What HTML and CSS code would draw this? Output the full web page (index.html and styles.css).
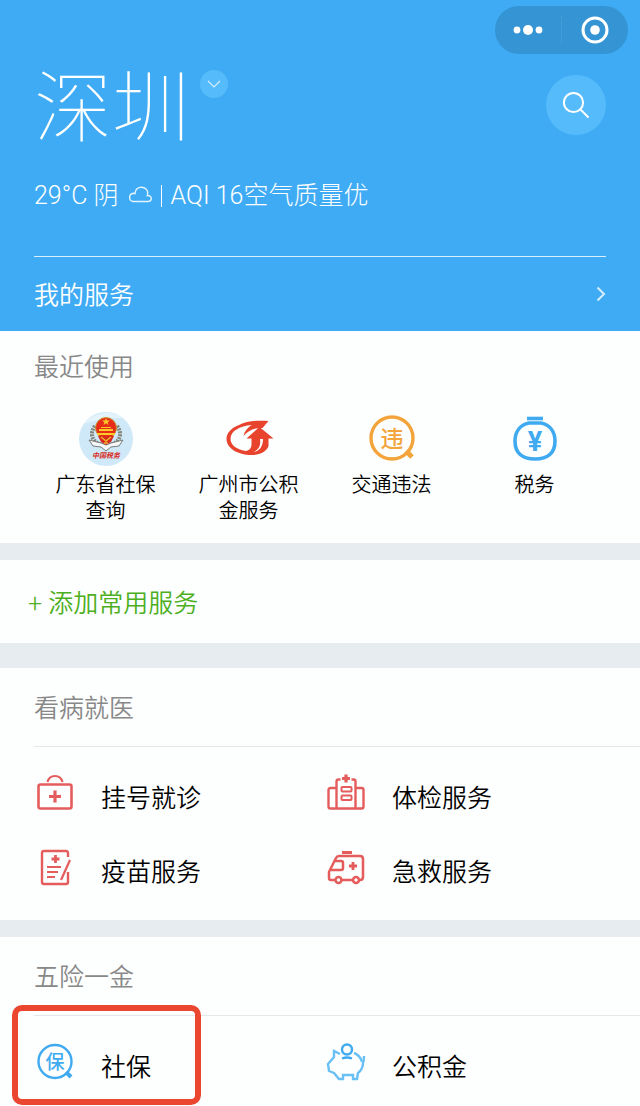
FILE: index.html
```html
<!DOCTYPE html>
<html lang="zh-CN">
<head>
    <meta charset="UTF-8">
    <meta name="viewport" content="width=device-width, initial-scale=1.0">
    <title>城市服务</title>
    <link rel="stylesheet" href="styles.css">
</head>
<body>
    <header class="hero">
        <div class="capsule-bar">
            <div class="capsule">
                <button type="button" aria-label="更多">
                    <svg width="32" height="12" viewBox="0 0 32 12" fill="#fff">
                        <circle cx="5" cy="6" r="3.4"/>
                        <circle cx="16" cy="6" r="5"/>
                        <circle cx="27" cy="6" r="3.4"/>
                    </svg>
                </button>
                <button type="button" aria-label="关闭">
                    <svg width="28" height="28" viewBox="0 0 28 28">
                        <circle cx="14" cy="14" r="12" fill="none" stroke="#fff" stroke-width="3"/>
                        <circle cx="14" cy="14" r="4.8" fill="#fff"/>
                    </svg>
                </button>
            </div>
        </div>

        <div class="city-row">
            <h1 class="city">深圳</h1>
            <button type="button" class="city-switch" aria-label="切换城市">
                <svg width="14" height="8" viewBox="0 0 14 8" fill="none" stroke="#d6eefc" stroke-width="1.2">
                    <path d="M1 1l6 6 6-6"/>
                </svg>
            </button>
            <button type="button" class="search-btn" aria-label="搜索">
                <svg width="28" height="28" viewBox="0 0 28 28" fill="none" stroke="#fff" stroke-width="2" stroke-linecap="round">
                    <circle cx="11.5" cy="11.5" r="9.6"/>
                    <path d="M18.5 18.5l7.500 7.500"/>
                </svg>
            </button>
        </div>

        <p class="weather">
            <span>29°C 阴</span>
            <svg width="24" height="20" viewBox="0 0 24 20" fill="none" stroke="#e4f4fe" stroke-width="1.400">
                <path d="M5 15.500a4.200 4.200 0 0 1 .5-8.300c.7 0 1 .1 1.500.300C7.200 3.500 10 1.200 13.400 1.200c3.800 0 6.500 2.900 6.300 6.300-.1 1-.2 1.600-.4 2.100 2.400-.3 4 1 4 2.900s-1.400 3-3.300 3z"/>
            </svg>
            <span class="weather-line"></span>
            <span>AQI 16空气质量优</span>
        </p>

        <a href="#" class="my-services">
            <span>我的服务</span>
            <svg width="10" height="16" viewBox="0 0 10 16" fill="none" stroke="#d6eefc" stroke-width="2">
                <path d="M1.500 1.500L8 8l-6.500 6.500"/>
            </svg>
        </a>
    </header>

    <main>
        <section class="card recent">
            <h2 class="recent-title">最近使用</h2>
            <div class="recent-grid">
                <a href="#" class="recent-item">
                    <svg class="recent-icon" viewBox="0 0 54 54">
                        <circle cx="27" cy="27" r="27" fill="#cfe9f8"/>
                        <path d="M5 12C14-1 34-2 44 6c-9 0-22 0-39 6z" fill="#e3f3fb"/>
                        <path d="M16 14c-6 8-3 16 7 19M38 14c6 8 3 16-7 19" fill="none" stroke="#85847a" stroke-width="4" stroke-dasharray="2 1"/>
                        <path d="M10 28l12 3 5 2 5-2 12-3-4 6-8 1-5 4-5-4-8-1z" fill="#f5f8f7" stroke="#777c7b" stroke-width="1"/>
                        <circle cx="27" cy="16" r="10.500" fill="#e72d18" stroke="#c99331" stroke-width="1"/>
                        <path d="M27 6l1 2.500h3l-2.300 1.700.8 2.800-2.500-1.700-2.500 1.700.8-2.800L23 8.500h3zM20 17h14v2H20zM22 15h10v1H22zM18 21h18v2H18z" fill="#ffc928"/>
                        <path d="M19 24h16l-3 6-5 3-5-3z" fill="#d8291b"/>
                        <path d="M22 25l5 4 5-4M25 31h4" fill="none" stroke="#efb52d" stroke-width="1.500"/>
                        <text x="27" y="46" class="emblem-text">中国税务</text>
                    </svg>
                    <span>广东省社保查询</span>
                </a>
                <a href="#" class="recent-item">
                    <svg class="recent-icon" viewBox="0 0 54 54" fill="#e8432d">
                        <path d="M46.500 9C36 8 25 9 17 13 9 16 4.500 21 4.500 27c0 9 11 16 25 16 8 0 15-3 17-9V26.500h5L37.500 15 24.500 26.500h5V32c0 4-2 6-5 7C15 38 8.500 33 8.500 27c0-8 9-13 21-14-4 3-7 6-8 11 5-5 9-8 19-8z"/>
                        <path d="M38 27c1 6-1 10-6 13 5-1 9-5 9-13z" fill="#fdfefe"/>
                    </svg>
                    <span>广州市公积金服务</span>
                </a>
                <a href="#" class="recent-item">
                    <svg class="recent-icon" viewBox="0 0 54 54">
                        <circle cx="27" cy="26" r="21" fill="none" stroke="#f3a43b" stroke-width="3.400"/>
                        <path d="M41 39l6 6" stroke="#f3a43b" stroke-width="5"/>
                        <text x="27" y="35" class="glyph glyph-orange">违</text>
                    </svg>
                    <span>交通违法</span>
                </a>
                <a href="#" class="recent-item">
                    <svg class="recent-icon" viewBox="0 0 54 54" fill="none" stroke="#40aaf0" stroke-width="3.600">
                        <path d="M19 6.500h16"/>
                        <path d="M21 11h12C42 13 47 20 47 29c0 12-7 18-20 18S7 41 7 29C7 20 12 13 21 11z"/>
                        <text x="27" y="39" class="glyph glyph-yen">¥</text>
                    </svg>
                    <span>税务</span>
                </a>
            </div>
        </section>

        <section class="card add-card">
            <a href="#" class="add-link">+ 添加常用服务</a>
        </section>

        <section class="card">
            <h2 class="card-title">看病就医</h2>
            <div class="service-grid">
                <a href="#" class="service">
                    <svg class="service-icon" viewBox="0 0 42 42" fill="none" stroke="#e55c5c" stroke-width="2.600">
                        <rect x="4.500" y="11.500" width="33" height="24" rx="2"/>
                        <path d="M13.500 9c2-8 13-8 15 0" stroke-width="2.200"/>
                        <path d="M21 17.500v12M15 23.500h12" stroke-width="3.200"/>
                    </svg>
                    <span>挂号就诊</span>
                </a>
                <a href="#" class="service">
                    <svg class="service-icon" viewBox="0 0 42 42" fill="none" stroke="#e55c5c" stroke-width="2.400">
                        <path d="M11.500 36V8.500q0-2 2-2H15.500M26.500 6.500h2q2 0 2 2V36"/>
                        <path d="M11.500 15H5.500q-2 0-2 2v16.500q0 2 2 2h31q2 0 2-2V17q0-2-2-2h-6"/>
                        <path d="M21 1.500v8M17 5.500h8" stroke-width="3.200"/>
                        <rect x="16.500" y="14" width="10" height="4.500" rx="1" stroke-width="2"/>
                        <rect x="16.500" y="22.500" width="10" height="4.500" rx="1" stroke-width="2"/>
                    </svg>
                    <span>体检服务</span>
                </a>
                <a href="#" class="service">
                    <svg class="service-icon" viewBox="0 0 42 42" fill="none" stroke="#e55c5c" stroke-width="2.400">
                        <path d="M34 10V6q0-2-2-2H10Q8 4 8 6v29q0 2 2 2h22q2 0 2-2V25"/>
                        <path d="M36 13L27 33" stroke-width="2.200"/>
                        <path d="M21.500 8v8M17.500 12h8" stroke-width="2.800"/>
                        <path d="M13 20h14M13 25h11M13 30h8" stroke-width="2"/>
                    </svg>
                    <span>疫苗服务</span>
                </a>
                <a href="#" class="service">
                    <svg class="service-icon" viewBox="0 0 42 42" fill="none" stroke="#e55c5c" stroke-width="2.500">
                        <path d="M10 33H6q-2 0-2-2v-6l7-14q1-2 3-2h21q3 0 3 3v18q0 3-3 3h-2M17 33h10"/>
                        <path d="M9 14h7q2 0 2 2v5q0 2-2 2H6"/>
                        <path d="M17 5.500h10M28 15v8M24 19h8" stroke-width="2.800"/>
                        <circle cx="13.500" cy="33" r="3"/>
                        <circle cx="31" cy="33" r="3"/>
                    </svg>
                    <span>急救服务</span>
                </a>
            </div>
        </section>

        <section class="card">
            <h2 class="card-title">五险一金</h2>
            <div class="service-grid">
                <a href="#" class="service marked">
                    <svg class="service-icon" viewBox="0 0 42 42">
                        <circle cx="21" cy="19.500" r="16.500" fill="none" stroke="#40aaf0" stroke-width="2.400"/>
                        <path d="M32 30l5 5" stroke="#40aaf0" stroke-width="4"/>
                        <text x="21" y="26.500" class="glyph glyph-blue">保</text>
                    </svg>
                    <span>社保</span>
                </a>
                <a href="#" class="service">
                    <svg class="service-icon" viewBox="0 0 42 42" fill="none" stroke="#69c0f4" stroke-width="2.400">
                        <circle cx="22" cy="7.500" r="5" stroke="#40aaf0"/>
                        <path d="M17 16.500q5-2 10 0" stroke="#40aaf0"/>
                        <path d="M15 12l-6-3v6L3 22l1 7 5 2 5 6h4v-4h10v4h4l1-6q5-4 5-10 1-2 1-7"/>
                        <path d="M29 11q6 2 8 9"/>
                    </svg>
                    <span>公积金</span>
                </a>
            </div>
        </section>
    </main>
</body>
</html>
```
FILE: styles.css
```css
:root {
    --sky: #3eabf4;
    --sky-light: #56bbfa;
    --paper: #fdfefe;
    --gap: #e7ecf1;
    --mark: #ea4630;
}

*,
*::after {
    box-sizing: border-box;
    margin: 0;
    padding: 0;
}

body {
    background: var(--paper);
    color: #000;
    font-family: Roboto, "Noto Sans CJK SC", sans-serif;
    font-size: 25px;
    font-weight: 350;
    line-height: 36px;
}

a {
    color: inherit;
    text-decoration: none;
}

button {
    border: none;
    background: none;
    cursor: pointer;
}

svg {
    display: block;
    flex-shrink: 0;
}

/* Header */
.hero {
    background: var(--sky);
    color: #fff;
}

.capsule-bar {
    display: flex;
    justify-content: flex-end;
    padding: 6px 12px 0;
}

.capsule {
    display: flex;
    align-items: center;
    width: 133px;
    height: 48px;
    border-radius: 24px;
    background: #3594d3;
}

.capsule button {
    flex: 1;
    display: flex;
    justify-content: center;
    align-items: center;
    height: 28px;
}

.capsule button + button {
    border-left: 1px dotted #4ba3dc;
}

.city-row {
    display: flex;
    align-items: center;
    padding: 7px 34px 0;
}

.city {
    padding-top: 10px;
    font-size: 78px;
    font-weight: 100;
    line-height: 78px;
}

.city-switch,
.search-btn {
    display: flex;
    justify-content: center;
    align-items: center;
    border-radius: 50%;
    background: var(--sky-light);
}

.city-switch {
    align-self: flex-start;
    width: 28px;
    height: 28px;
    margin: 9px 0 0 10px;
}

.search-btn {
    width: 60px;
    height: 60px;
    margin-left: auto;
}

.weather {
    display: flex;
    align-items: center;
    gap: 9px;
    padding: 29px 34px 42px;
    font-weight: 300;
}

.weather-line {
    width: 1px;
    height: 22px;
    background: #fff;
}

.my-services {
    display: flex;
    justify-content: space-between;
    align-items: center;
    height: 75px;
    margin: 0 34px;
    border-top: 1px solid #d6eefc;
}

.my-services span {
    padding-top: 4px;
}

/* Cards */
.card + .card {
    border-top: 17px solid var(--gap);
}

.recent-title,
.card-title {
    color: #888;
    font-size: 25px;
    font-weight: 350;
}

.recent {
    padding: 19px 34px 19px;
}

.recent-grid {
    display: grid;
    grid-template-columns: repeat(4, 1fr);
    padding-top: 26px;
}

.recent-item {
    display: flex;
    flex-direction: column;
    align-items: center;
    gap: 6px;
    font-size: 20px;
    line-height: 26px;
    text-align: center;
}

.recent-item span {
    max-width: 104px;
}

.recent-icon {
    width: 54px;
    height: 54px;
}

.add-card {
    padding: 26px 28px 21px;
}

.add-link {
    display: block;
    color: #4caf20;
}

.card.add-card + .card {
    border-top-width: 25px;
}

.card-title {
    margin-left: 34px;
    padding: 23px 0 19px;
    border-bottom: 1px solid #e4e8eb;
}

.service-grid {
    display: grid;
    grid-template-columns: 1fr 1fr;
    padding: 13px 24px 12px 34px;
}

.service {
    display: flex;
    align-items: center;
    gap: 25px;
    height: 74px;
}

.service span {
    padding-top: 4px;
}

.service-icon {
    width: 42px;
    height: 42px;
    margin-bottom: 6px;
}

/* Frame drawn over the highlighted service */
.marked {
    position: relative;
}

.marked::after {
    content: "";
    position: absolute;
    top: -24px;
    left: -22px;
    width: 189px;
    height: 100px;
    border: 6px solid var(--mark);
    border-radius: 10px;
}

/* Characters inside icons */
.glyph {
    font-family: "Noto Sans CJK SC", sans-serif;
    font-weight: 500;
    text-anchor: middle;
    stroke: none;
}

.glyph-orange {
    fill: #f3a43b;
    font-size: 23px;
}

.glyph-blue {
    fill: #40aaf0;
    font-size: 19px;
}

.glyph-yen {
    fill: #40aaf0;
    font-family: Roboto, sans-serif;
    font-size: 27px;
    font-weight: 700;
}

.emblem-text {
    fill: #d9291c;
    font-family: "Noto Sans CJK SC", sans-serif;
    font-size: 7px;
    font-style: italic;
    font-weight: 700;
    text-anchor: middle;
}
```
